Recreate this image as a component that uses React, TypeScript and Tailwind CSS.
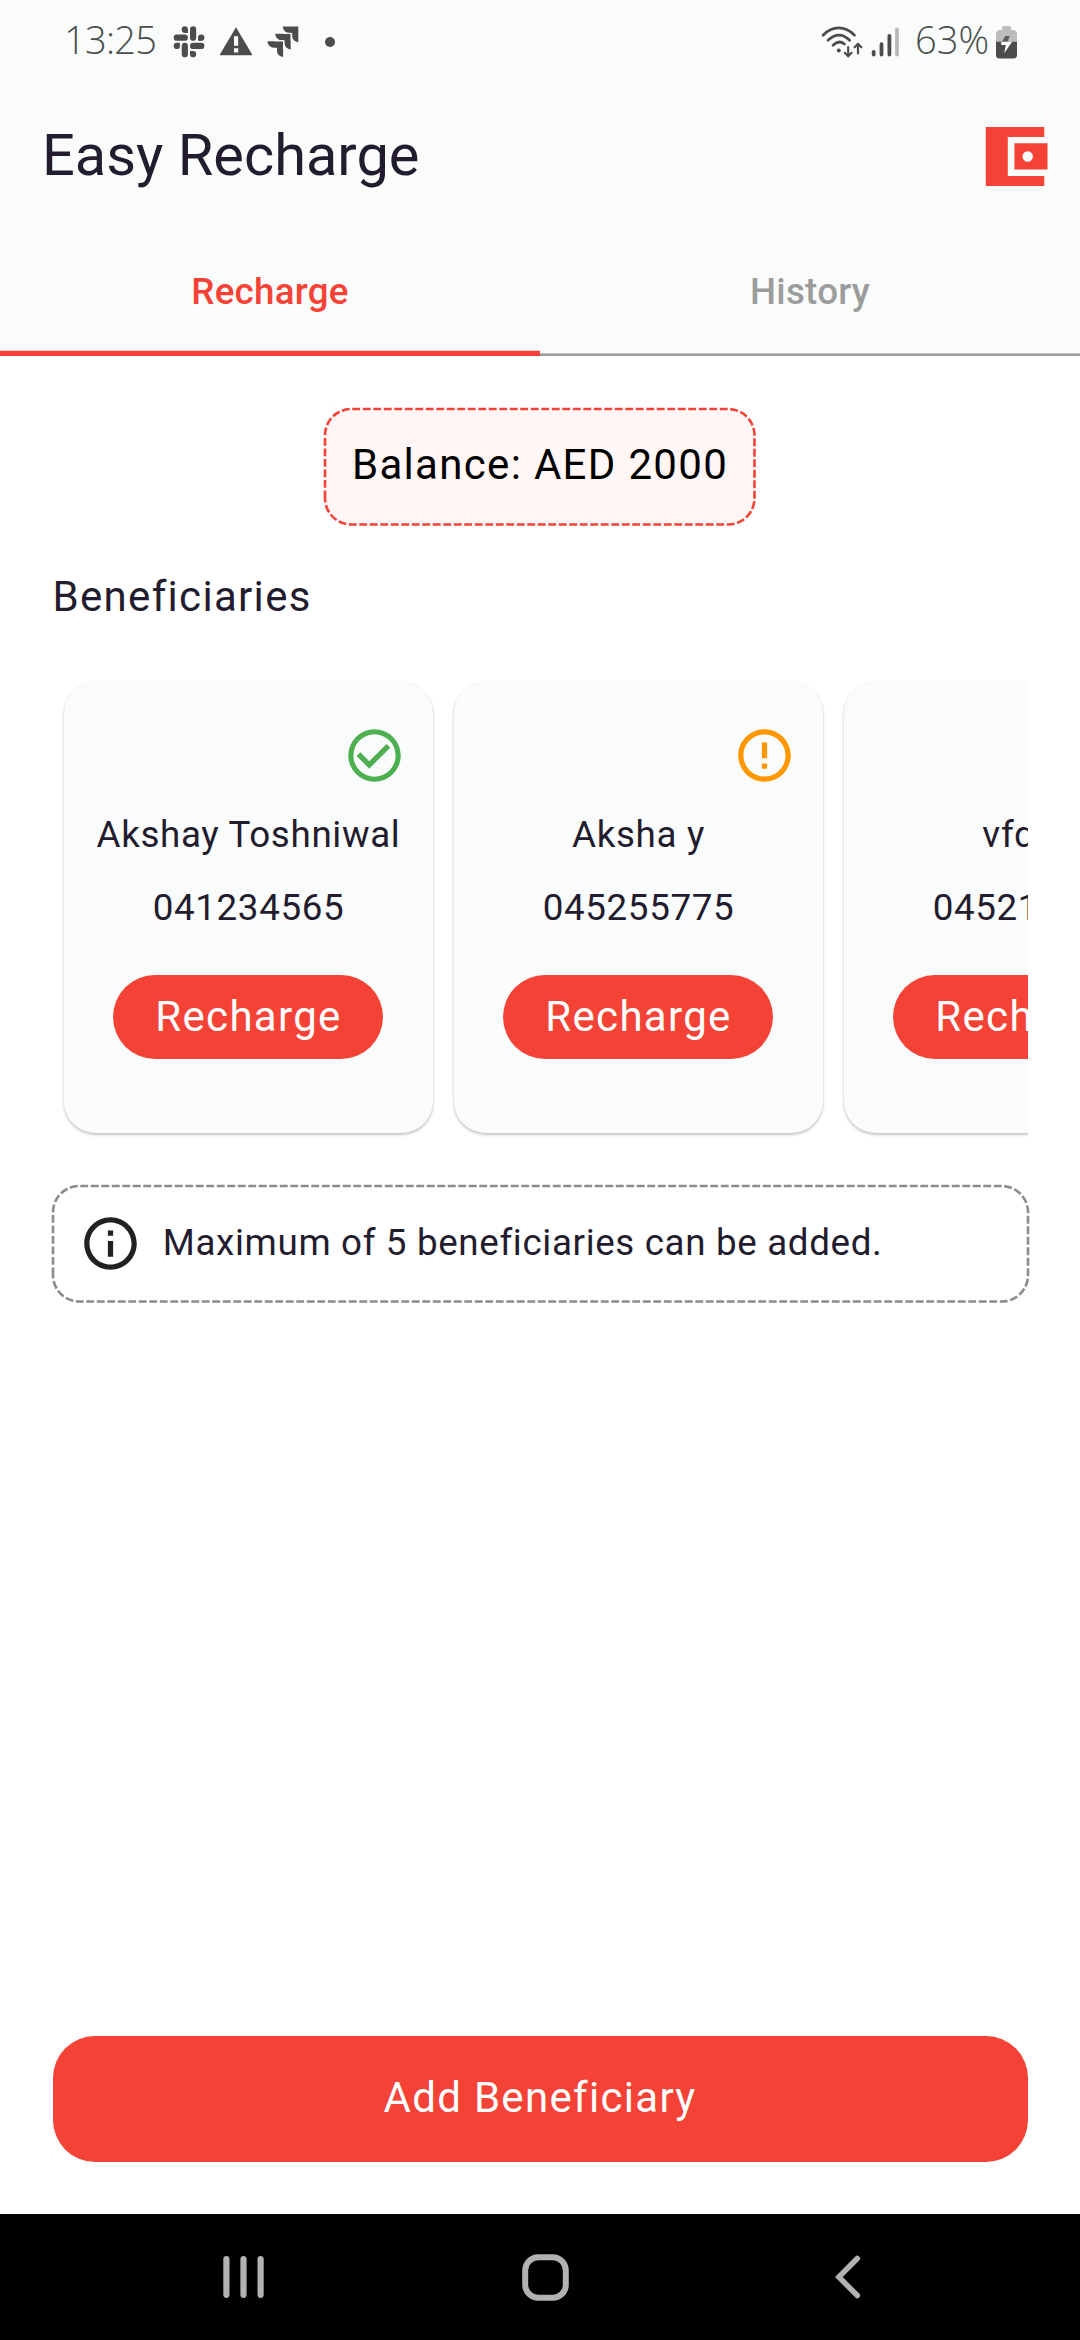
import type { ReactNode } from "react";

const beneficiaries = [
  { name: "Akshay Toshniwal", phone: "041234565", verified: true },
  { name: "Aksha y", phone: "045255775", verified: false },
  { name: "vfdcs", phone: "045215555", verified: true },
];

function SlackIcon() {
  return (
    <svg className="ml-[17px] h-8 w-8 shrink-0" viewBox="0 0 32 32" fill="#4b4d4c">
      <rect x="8.7" y="0.3" width="6.2" height="6.6" rx="3.1" />
      <rect x="0.7" y="8.6" width="14.2" height="6.2" rx="3.1" />
      <rect x="17" y="0.3" width="6.2" height="14.5" rx="3.1" />
      <rect x="25" y="8.6" width="6.4" height="6.2" rx="3.1" />
      <rect x="17" y="16.8" width="14.4" height="6.2" rx="3.1" />
      <rect x="17" y="24.9" width="6.2" height="6.4" rx="3.1" />
      <rect x="8.7" y="16.8" width="6.2" height="14.5" rx="3.1" />
      <rect x="0.7" y="16.8" width="6.2" height="6.2" rx="3.1" />
      <path d="M12 3.5h2.9v3.4H12zM25 11.5h3v3.3h-3zM17 24.9h3v3h-3zM4 16.8h2.9v3H4z" />
    </svg>
  );
}

function WarningIcon() {
  return (
    <svg className="ml-[14px] h-8 w-[34px] shrink-0" viewBox="0 0 34 32" fill="#4b4d4c">
      <path
        fillRule="evenodd"
        d="M17 1.2 33 28.2a.8.8 0 0 1-.7 1.1H1.7A.8.8 0 0 1 1 28.2ZM15 10.3v9.5h4.2v-9.5ZM15 22.2v4.2h4.2v-4.2Z"
      />
    </svg>
  );
}

function JiraIcon() {
  return (
    <svg className="ml-[14px] h-8 w-8 shrink-0" viewBox="0 0 32 32" fill="#4b4d4c">
      <path d="M15.8 0.5H31.3V16.2C27.5 15.5 25.3 13.3 25.2 10.2V6.9H22C18.7 6.7 16.2 4.5 15.8 .5Z" />
      <path d="M8.2 7.8H23.7V23.5C19.9 22.8 17.7 20.6 17.6 17.5V14.2H14.4C11.1 14 8.6 11.8 8.2 7.8Z" />
      <path d="M.5 15.3H16.1V31.1C12.3 30.4 10.1 28.2 10 25V21.7H6.8C3.5 21.5 .9 19.3 .5 15.3Z" />
      <path d="M15.4 7.3H24.2V16M7.7 14.8H16.6V23.5" fill="none" stroke="#fafcfb" strokeWidth="1" />
    </svg>
  );
}

function WifiIcon() {
  return (
    <svg
      className="h-8 w-[42px] shrink-0"
      viewBox="0 0 42 32"
      fill="none"
      stroke="#4b4d4c"
      strokeWidth="2.7"
      strokeLinecap="round"
    >
      <path d="M2 9.2C11.5-.5 24-.5 33.5 9.2" />
      <path d="M7 14.3C14 7.4 22 7.4 28.6 14.3" />
      <path d="M12 19.2C15.8 15.4 20 15.3 23.5 18" />
      <circle cx="17.8" cy="24.6" r="2" fill="#4b4d4c" stroke="none" />
      <path strokeWidth="2.2" d="M27.2 21V29.8M23.8 26.8 27.2 30.2 30.6 26.8M37 27.5V18.3M33.6 21.3 37 17.9 40.4 21.3" />
    </svg>
  );
}

function SignalIcon() {
  return (
    <svg className="ml-2 h-8 w-7 shrink-0" viewBox="0 0 28 32" strokeWidth="3.8" strokeLinecap="round" stroke="#4b4d4c">
      <path d="M2.7 25.8V28.5M10.5 18.2V28.5M18.4 10V28.5" />
      <path d="M26 3.5V28.5" stroke="#b7b9b8" />
    </svg>
  );
}

function BatteryIcon() {
  return (
    <svg className="ml-[5px] h-[34px] w-[21px] shrink-0" viewBox="0 0 21 34">
      <path d="M6 5V3.2Q6 1 8.2 1H13Q15.2 1 15.2 3.2V5H17Q21 5.3 21 9V17H0V9Q0 5.3 4 5Z" fill="#bbbdbc" />
      <path d="M0 16.8H21V30Q21 33.6 17.4 33.6H3.6Q0 33.6 0 30Z" fill="#4b4d4c" />
      <path d="M9.3 11H13.7L11.5 17H5.8Z" fill="#5d5f5e" />
      <path d="M5.3 16.8H16.2L8.2 28.3 9.8 20H5.3Z" fill="#fff" />
    </svg>
  );
}

function WalletIcon() {
  return (
    <svg className="mb-[2px] h-[60px] w-[63px]" viewBox="0 0 63 60" fill="#f44336">
      <path d="M.8.9H59.3V11H22.8V49.9H59.3V59.9H.8Z" />
      <path fillRule="evenodd" d="M29.4 17.3H62.5V43.6H29.4ZM42.7 25.3a5.2 5.2 0 1 0 0 10.4 5.2 5.2 0 0 0 0-10.4Z" />
    </svg>
  );
}

function CheckCircle() {
  return (
    <svg className="h-[63px] w-[63px]" viewBox="0 0 24 24" fill="#4caf50">
      <path d="M12 2a10 10 0 1 0 0 20 10 10 0 0 0 0-20Zm0 18.05a8.05 8.05 0 1 1 0-16.1 8.05 8.05 0 0 1 0 16.1Z" />
      <path d="M16.59 7.58 10 14.17 6.6 10.78 5.19 12.19 10 17 18 9Z" />
    </svg>
  );
}

function ErrorCircle() {
  return (
    <svg className="h-[63px] w-[63px]" viewBox="0 0 24 24" fill="#ff9800">
      <path d="M11 15h2v2h-2zm0-8h2v6h-2zm.99-5C6.47 2 2 6.48 2 12s4.47 10 9.99 10C17.52 22 22 17.52 22 12S17.52 2 11.99 2zM12 20c-4.42 0-8-3.58-8-8s3.58-8 8-8 8 3.58 8 8-3.58 8-8 8z" />
    </svg>
  );
}

function InfoCircle() {
  return (
    <svg className="h-[63px] w-[63px] shrink-0" viewBox="0 0 24 24" fill="#212121">
      <path d="M11 7h2v2h-2zm0 4h2v6h-2zm1-9C6.48 2 2 6.48 2 12s4.48 10 10 10 10-4.48 10-10S17.52 2 12 2zm0 18c-4.41 0-8-3.59-8-8s3.59-8 8-8 8 3.59 8 8-3.59 8-8 8z" />
    </svg>
  );
}

/* Rounded dashed outline; the dash run starts at the lower left and goes clockwise. */
function DashedBox(props: { width: number; stroke: string; fill: string; className: string; children: ReactNode }) {
  const w = props.width;
  const h = 115.5;
  const r = 26.25;
  const d = `M0 ${h - r}V${r}A${r} ${r} 0 0 1 ${r} 0H${w - r}A${r} ${r} 0 0 1 ${w} ${r}V${h - r}A${r} ${r} 0 0 1 ${w - r} ${h}H${r}A${r} ${r} 0 0 1 0 ${h - r}`;
  return (
    <div className={props.className}>
      <svg className="absolute inset-0 h-full w-full overflow-visible">
        <path d={d} fill={props.fill} stroke={props.stroke} strokeWidth="2.625" strokeDasharray="7.875 2.625" />
      </svg>
      {props.children}
    </div>
  );
}

export default function App() {
  return (
    <div className="flex h-[2340px] w-[1080px] flex-col overflow-hidden bg-white font-[Roboto,sans-serif] text-[#231c2e]">
      <header className="bg-[#fafcfb]">
        <div className="flex h-[83px] items-center pl-[64px] pr-[63px] text-[#4b4d4c]">
          <span className="w-[92px] whitespace-nowrap pb-[5px] font-['Open_Sans','Noto_Sans',sans-serif] text-[38px] font-[350] leading-none tracking-[-0.7px]">
            13:25
          </span>
          <SlackIcon />
          <WarningIcon />
          <JiraIcon />
          <span className="ml-[26px] h-[10px] w-[10px] rounded-full bg-[#4b4d4c]" />
          <div className="ml-auto flex items-center">
            <WifiIcon />
            <SignalIcon />
            <span className="ml-[16px] w-[76px] whitespace-nowrap pb-[5px] font-['Open_Sans','Noto_Sans',sans-serif] text-[38px] font-[350] leading-none">
              63%
            </span>
            <BatteryIcon />
          </div>
        </div>
        <div className="flex h-[147px] items-center justify-between pl-[42px] pr-[32px]">
          <h1 className="pb-[2px] text-[57.75px] leading-[73.5px]">Easy Recharge</h1>
          <WalletIcon />
        </div>
        <nav className="grid h-[126px] grid-cols-2 text-[36.75px] font-medium tracking-[0.26px]">
          <div className="flex flex-col text-[#f44336]">
            <span className="flex flex-1 items-center justify-center pt-[3px]">Recharge</span>
            <span className="h-[6px] border-t border-[#fbc9c5] bg-[#f44336]" />
          </div>
          <div className="flex flex-col text-[#9b9d9c]">
            <span className="mb-[3px] flex flex-1 items-center justify-center pt-[3px]">History</span>
            <span className="h-[3px] border-t border-[#c4c6c5] bg-[#9b9d9c]" />
          </div>
        </nav>
      </header>

      <main className="flex flex-1 flex-col px-[52.5px] pb-[52.5px] pt-[52.5px]">
        <DashedBox
          width={429.5}
          stroke="#f44336"
          fill="#fff6f5"
          className="relative flex h-[115.5px] w-[429.5px] items-center justify-center self-center"
        >
          <span className="relative whitespace-nowrap pb-[4px] text-[42px] leading-[63px] tracking-[1.3125px] text-black">
            Balance: AED 2000
          </span>
        </DashedBox>

        <h2 className="mb-px mt-[41px] text-[42px] leading-[63px] tracking-[1.3125px]">Beneficiaries</h2>

        <section className="mt-[42px] flex h-[483px] gap-[21px] overflow-hidden px-[11px] pt-[10.5px]">
          {beneficiaries.map((b) => (
            <article
              key={b.phone}
              className="flex h-[451.5px] w-[369px] shrink-0 flex-col items-center rounded-[31.5px] bg-[#fafcfb] pt-[42px] shadow-[0_2px_3px_rgba(0,0,0,0.22),0_0_3px_rgba(0,0,0,0.05)]"
            >
              <div className="mr-[26.5px] self-end">{b.verified ? <CheckCircle /> : <ErrorCircle />}</div>
              <span className="mt-[22px] whitespace-nowrap pl-px text-[36.75px] leading-[52.5px] tracking-[0.65px]">{b.name}</span>
              <span className="mt-[21px] pl-px text-[36.75px] leading-[52.5px] tracking-[0.65px]">{b.phone}</span>
              <button className="mt-[40px] h-[84px] w-[270.5px] rounded-full bg-[#f44336] pl-px text-[42px] leading-[63px] tracking-[1.3125px] text-white">
                Recharge
              </button>
            </article>
          ))}
        </section>

        <DashedBox
          width={975}
          stroke="#8c8c8c"
          fill="none"
          className="relative mt-[31.5px] flex h-[115.5px] w-[975px] items-center gap-[21px] px-[26.25px]"
        >
          <InfoCircle />
          <span className="whitespace-nowrap text-[36.75px] leading-[52.5px] tracking-[0.65px]">
            Maximum of 5 beneficiaries can be added.
          </span>
        </DashedBox>

        <button className="mt-auto h-[126px] rounded-[42px] bg-[#f44336] pb-[3px] text-[42px] leading-[63px] tracking-[1.3125px] text-white">
          Add Beneficiary
        </button>
      </main>

      <footer className="flex h-[126px] items-center bg-black pl-[223px]">
        <svg className="h-11 w-[41px]" viewBox="0 0 41 44" stroke="#b2b2b2" strokeWidth="6.2" strokeLinecap="round">
          <path d="M3.4 4V39.8M20.5 4V39.8M37.6 4V39.8" />
        </svg>
        <svg className="ml-[258px] h-[47px] w-[47px]" viewBox="0 0 47 47" fill="none" stroke="#b2b2b2" strokeWidth="6">
          <rect x="3.2" y="3.2" width="40.6" height="40.6" rx="13" />
        </svg>
        <svg
          className="ml-[266px] h-11 w-[26px]"
          viewBox="0 0 26 44"
          fill="none"
          stroke="#b2b2b2"
          strokeWidth="5.5"
          strokeLinecap="round"
        >
          <path d="M22.3 3.5 3.8 22 22.3 40.5" />
        </svg>
      </footer>
    </div>
  );
}
